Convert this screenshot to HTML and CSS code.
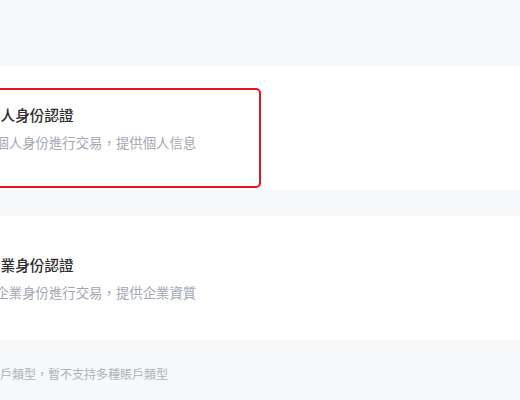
FILE: index.html
```html
<!DOCTYPE html>
<html lang="zh-Hant">
<head>
<meta charset="utf-8">
<link rel="stylesheet" href="styles.css">
</head>
<body>
<div class="page">
  <div class="top"></div>
  <div class="section">
    <div class="card active">
      <div class="title">個人身份認證</div>
      <div class="desc">以個人身份進行交易，提供個人信息</div>
    </div>
  </div>
  <div class="gap"></div>
  <div class="section">
    <div class="card">
      <div class="title">企業身份認證</div>
      <div class="desc">以企業身份進行交易，提供企業資質</div>
    </div>
  </div>
  <div class="footer">請選擇賬戶類型，暫不支持多種賬戶類型</div>
</div>
</body>
</html>
```
FILE: styles.css
```css
html, body {
  margin: 0;
  padding: 0;
}
body {
  width: 520px;
  height: 400px;
  overflow: hidden;
  background: #f7f8fa;
  font-family: "Noto Sans CJK TC", "Noto Sans CJK SC", sans-serif;
}
.page {
  width: 520px;
  overflow: hidden;
}
.top {
  height: 66px;
}
.section {
  background: #ffffff;
  height: 124px;
  box-sizing: border-box;
  padding-top: 22px;
}
.gap {
  height: 26px;
}
.card {
  margin-left: -28px;
  width: 289px;
  height: 100px;
  box-sizing: border-box;
  border: 2px solid transparent;
  border-radius: 5px;
  padding: 14px 0 0 11px;
}
.card.active {
  border-color: #e3141f;
}
.title {
  margin-left: 1px;
  font-size: 14.6px;
  line-height: 22px;
  font-weight: 500;
  color: #2d2d2d;
  white-space: nowrap;
}
.desc {
  margin-top: 7px;
  margin-left: -3px;
  font-size: 13.4px;
  line-height: 18px;
  color: #a2a7b2;
  white-space: nowrap;
}
.footer {
  margin-left: -48px;
  padding-top: 25px;
  font-size: 12px;
  line-height: 18px;
  color: #adb1ba;
  white-space: nowrap;
}
```
